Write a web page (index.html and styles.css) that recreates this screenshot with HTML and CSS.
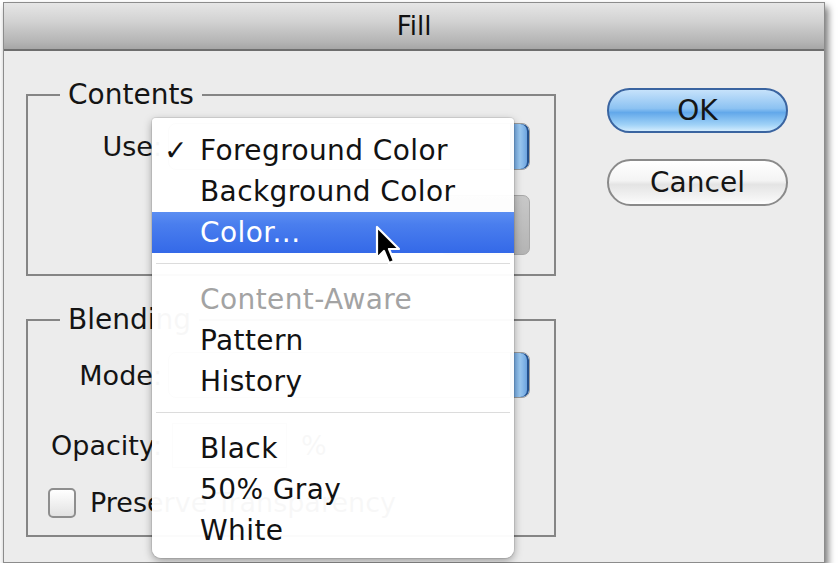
FILE: index.html
```html
<!DOCTYPE html>
<html>
<head>
<meta charset="utf-8">
<title>Fill</title>
<link rel="stylesheet" href="styles.css">
</head>
<body>
<div class="window">
  <div class="titlebar">Fill</div>
  <div class="main">
    <div class="left">
      <fieldset class="group contents">
        <legend>Contents</legend>
        <div class="row use-row">
          <span class="label">Use:</span>
          <div class="popup"><span class="cap"></span></div>
        </div>
        <div class="row pattern-row">
          <div class="swatch"></div>
        </div>
      </fieldset>
      <fieldset class="group blending">
        <legend>Blending</legend>
        <div class="row mode-row">
          <span class="label">Mode:</span>
          <div class="popup"><span class="cap"></span></div>
        </div>
        <div class="row opacity-row">
          <span class="label">Opacity:</span>
          <div class="field"></div>
          <span class="pct">%</span>
        </div>
        <div class="row check-row">
          <span class="checkbox"></span>
          <span class="check-label">Preserve Transparency</span>
        </div>
      </fieldset>
    </div>
    <div class="right">
      <button class="btn ok">OK</button>
      <button class="btn cancel">Cancel</button>
    </div>
  </div>

  <ul class="menu">
    <li class="item"><span class="tick">✓</span>Foreground Color</li>
    <li class="item">Background Color</li>
    <li class="item selected">Color...</li>
    <li class="sep"></li>
    <li class="item disabled">Content-Aware</li>
    <li class="item">Pattern</li>
    <li class="item">History</li>
    <li class="sep"></li>
    <li class="item">Black</li>
    <li class="item">50% Gray</li>
    <li class="item">White</li>
  </ul>

  <svg class="cursor" width="30" height="42" viewBox="0 0 30 42">
    <path d="M3 2 L3 33 L10 26 L15 38 L20 36 L15 24 L25 24 Z" fill="#000" stroke="#fff" stroke-width="2.2" stroke-linejoin="round"/>
  </svg>
</div>
</body>
</html>
```

FILE: styles.css
```css
html, body {
  margin: 0;
  padding: 0;
  background: #ffffff;
}

body {
  font-family: "DejaVu Sans", "Liberation Sans", sans-serif;
  color: #141414;
}

.window {
  position: relative;
  box-sizing: border-box;
  margin: 2px 0 0 3px;
  width: 822px;
  height: 561px;
  background: #ececec;
  border: 1px solid #8c8c8c;
  box-shadow: 3px 5px 7px rgba(0, 0, 0, 0.55);
  display: flex;
  flex-direction: column;
}

.titlebar {
  height: 46px;
  border-bottom: 2px solid #6e6e6e;
  background: linear-gradient(#e6e6e6 0%, #d2d2d2 40%, #b4b4b4 85%, #a6a6a6 100%);
  text-align: center;
  font-size: 26px;
  line-height: 46px;
  color: #111111;
}

.main {
  display: flex;
  padding: 29px 0 0 22px;
}

.left {
  width: 530px;
  display: flex;
  flex-direction: column;
}

.group {
  box-sizing: border-box;
  margin: 0;
  padding: 0;
  border: 2px solid #858585;
  width: 530px;
  display: flex;
  flex-direction: column;
}

.group legend {
  font-size: 28px;
  line-height: 30px;
  padding: 0 8px;
  margin-left: 32px;
}

.contents {
  height: 196px;
}

.blending {
  margin-top: 29px;
  height: 232px;
}

.row {
  display: flex;
  align-items: center;
}

.label {
  width: 134px;
  text-align: right;
  font-size: 27px;
  flex: none;
}

.use-row {
  margin-top: 13px;
  height: 47px;
}

.popup {
  margin-left: 6px;
  width: 362px;
  height: 47px;
  box-sizing: border-box;
  border: 1px solid #9a9a9a;
  border-radius: 8px;
  background: linear-gradient(#ffffff, #f2f2f2);
  display: flex;
  justify-content: flex-end;
  overflow: hidden;
}

.cap {
  width: 18px;
  height: 100%;
  background: linear-gradient(90deg, #5e9be0, #9ccaf2 50%, #5f98d8);
  border-left: 1px solid #2f5f9e;
  box-shadow: inset -2px 0 0 #23508c;
  border-radius: 0 7px 7px 0;
}

.pattern-row {
  margin-top: 25px;
  height: 60px;
  justify-content: flex-end;
  padding-right: 24px;
}

.swatch {
  width: 90px;
  height: 60px;
  box-sizing: border-box;
  border: 1px solid #a8a8a8;
  border-radius: 7px;
  background: linear-gradient(#c8c8c8, #b4b4b4);
}

.mode-row {
  margin-top: 17px;
  height: 46px;
}

.mode-row .popup {
  height: 46px;
}

.opacity-row {
  margin-top: 25px;
  height: 45px;
}

.field {
  margin-left: 10px;
  width: 115px;
  height: 45px;
  box-sizing: border-box;
  border: 1px solid #9c9c9c;
  background: #fff;
}

.pct {
  margin-left: 14px;
  font-size: 27px;
}

.check-row {
  margin-top: 19px;
  height: 31px;
  padding-left: 20px;
}

.checkbox {
  width: 28px;
  height: 30px;
  box-sizing: border-box;
  border: 2px solid #8e8e8e;
  border-radius: 5px;
  background: linear-gradient(#ffffff, #e2e2e2);
  flex: none;
}

.check-label {
  margin-left: 14px;
  font-size: 27px;
  white-space: nowrap;
}

.right {
  margin-left: 51px;
  padding-top: 8px;
  display: flex;
  flex-direction: column;
}

.btn {
  font-family: "DejaVu Sans", "Liberation Sans", sans-serif;
  font-size: 28px;
  color: #151515;
  width: 181px;
  box-sizing: border-box;
  border-radius: 24px;
  padding: 0;
}

.ok {
  height: 45px;
  border: 2px solid #3a64a0;
  background: linear-gradient(#c6e2fb 0%, #8cc2f2 45%, #62a8ea 55%, #a0d2f7 85%, #d2ecfe 100%);
}

.cancel {
  margin-top: 26px;
  height: 47px;
  border: 2px solid #8a8a8a;
  background: linear-gradient(#ffffff 0%, #f4f4f4 45%, #e4e4e4 55%, #f6f6f6 90%, #ffffff 100%);
}

.menu {
  position: absolute;
  left: 148px;
  top: 115px;
  width: 362px;
  height: 440px;
  box-sizing: border-box;
  margin: 0;
  padding: 12px 0 0 0;
  list-style: none;
  background: rgba(255, 255, 255, 0.97);
  border-radius: 4px 4px 9px 9px;
  box-shadow: 0 3px 9px rgba(0, 0, 0, 0.35), 0 0 0 1px rgba(0, 0, 0, 0.08);
}

.item {
  position: relative;
  height: 41px;
  line-height: 41px;
  padding-left: 48px;
  font-size: 28px;
  letter-spacing: 0.4px;
  color: #121212;
}

.tick {
  position: absolute;
  left: 12px;
  font-size: 28px;
}

.item.selected {
  color: #ffffff;
  background: linear-gradient(#5b8ef2 0%, #4a7eee 30%, #3469e8 100%);
}

.item.disabled {
  color: #a3a3a3;
}

.sep {
  height: 1px;
  margin: 10px 4px 15px 4px;
  background: #dcdcdc;
}

.cursor {
  position: absolute;
  left: 370px;
  top: 222px;
}
```
